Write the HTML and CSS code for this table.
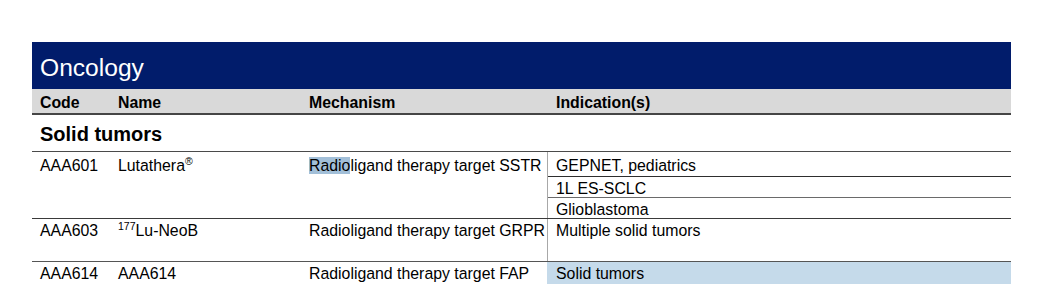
FILE: index.html
```html
<!DOCTYPE html>
<html lang="en">
<head>
<meta charset="utf-8">
<title>Oncology</title>
<link rel="stylesheet" href="styles.css">
</head>
<body>
<section class="sheet">
  <div class="title">Oncology</div>
  <div class="row head">
    <div class="cell">Code</div>
    <div class="cell">Name</div>
    <div class="cell">Mechanism</div>
    <div class="cell ind-head">Indication(s)</div>
  </div>
  <div class="section">Solid tumors</div>
  <div class="row r1">
    <div class="cell">AAA601</div>
    <div class="cell">Lutathera<sup class="sup">®</sup></div>
    <div class="cell"><span class="hl">Radio</span>ligand therapy target SSTR</div>
    <div class="ind">
      <div class="sub first">GEPNET, pediatrics</div>
      <div class="sub mid">1L ES-SCLC</div>
      <div class="sub last">Glioblastoma</div>
    </div>
  </div>
  <div class="row r2">
    <div class="cell">AAA603</div>
    <div class="cell"><sup class="sup pre">177</sup>Lu-NeoB</div>
    <div class="cell">Radioligand therapy target GRPR</div>
    <div class="cell ind-cell">Multiple solid tumors</div>
  </div>
  <div class="row r3">
    <div class="cell">AAA614</div>
    <div class="cell">AAA614</div>
    <div class="cell">Radioligand therapy target FAP</div>
    <div class="cell ind-cell blue">Solid tumors</div>
  </div>
</section>
</body>
</html>
```

FILE: styles.css
```css
html, body {
  margin: 0;
  padding: 0;
  background: #ffffff;
}

body {
  font-family: "Liberation Sans", Arial, sans-serif;
  color: #000;
  font-size: 15.85px;
  line-height: 18px;
}

.sheet {
  width: 979px;
  margin: 42px 0 0 32px;
  overflow: hidden;
}

.title {
  box-sizing: border-box;
  height: 47px;
  padding: 12px 0 0 8px;
  background: #011c6b;
  color: #fff;
  font-size: 24.6px;
  line-height: 28px;
}

.row {
  display: grid;
  grid-template-columns: 78px 191px 246px 1fr;
}

.cell {
  padding-left: 8px;
  white-space: nowrap;
}

.head {
  height: 24px;
  background: #d9d9d9;
  border-bottom: 2px solid #454545;
  font-weight: bold;
}

.head .cell {
  padding-top: 5px;
}

.head .ind-head {
  padding-left: 9px;
}

.section {
  box-sizing: border-box;
  height: 37px;
  padding: 8px 0 0 8px;
  font-size: 20px;
  line-height: 23px;
  font-weight: bold;
  border-bottom: 1px solid #4a4a4a;
}

.r1 {
  border-bottom: 1px solid #3a3a3a;
}

.r1 > .cell {
  padding-top: 5px;
}

.ind {
  border-left: 1px solid #a8a8a8;
  display: flex;
  flex-direction: column;
}

.sub {
  box-sizing: border-box;
  padding-left: 8px;
  white-space: nowrap;
}

.sub.first {
  height: 25px;
  padding-top: 5px;
  border-bottom: 1px solid #2e2e2e;
}

.sub.mid {
  height: 21px;
  padding-top: 3px;
  border-bottom: 1px solid #6a6a6a;
}

.sub.last {
  height: 20px;
  padding-top: 3px;
}

.r2 {
  height: 42px;
  border-bottom: 1px solid #555;
}

.r2 > .cell,
.r3 > .cell {
  padding-top: 3px;
}

.ind-cell {
  border-left: 1px solid #a8a8a8;
}

.r3 {
  height: 30px;
}

.blue {
  background: #c5daea;
  border-left-color: #c5daea;
}

.hl {
  background: #a2bfd8;
}

.sup {
  font-size: 10.5px;
  line-height: 0;
  vertical-align: 6px;
}
```
